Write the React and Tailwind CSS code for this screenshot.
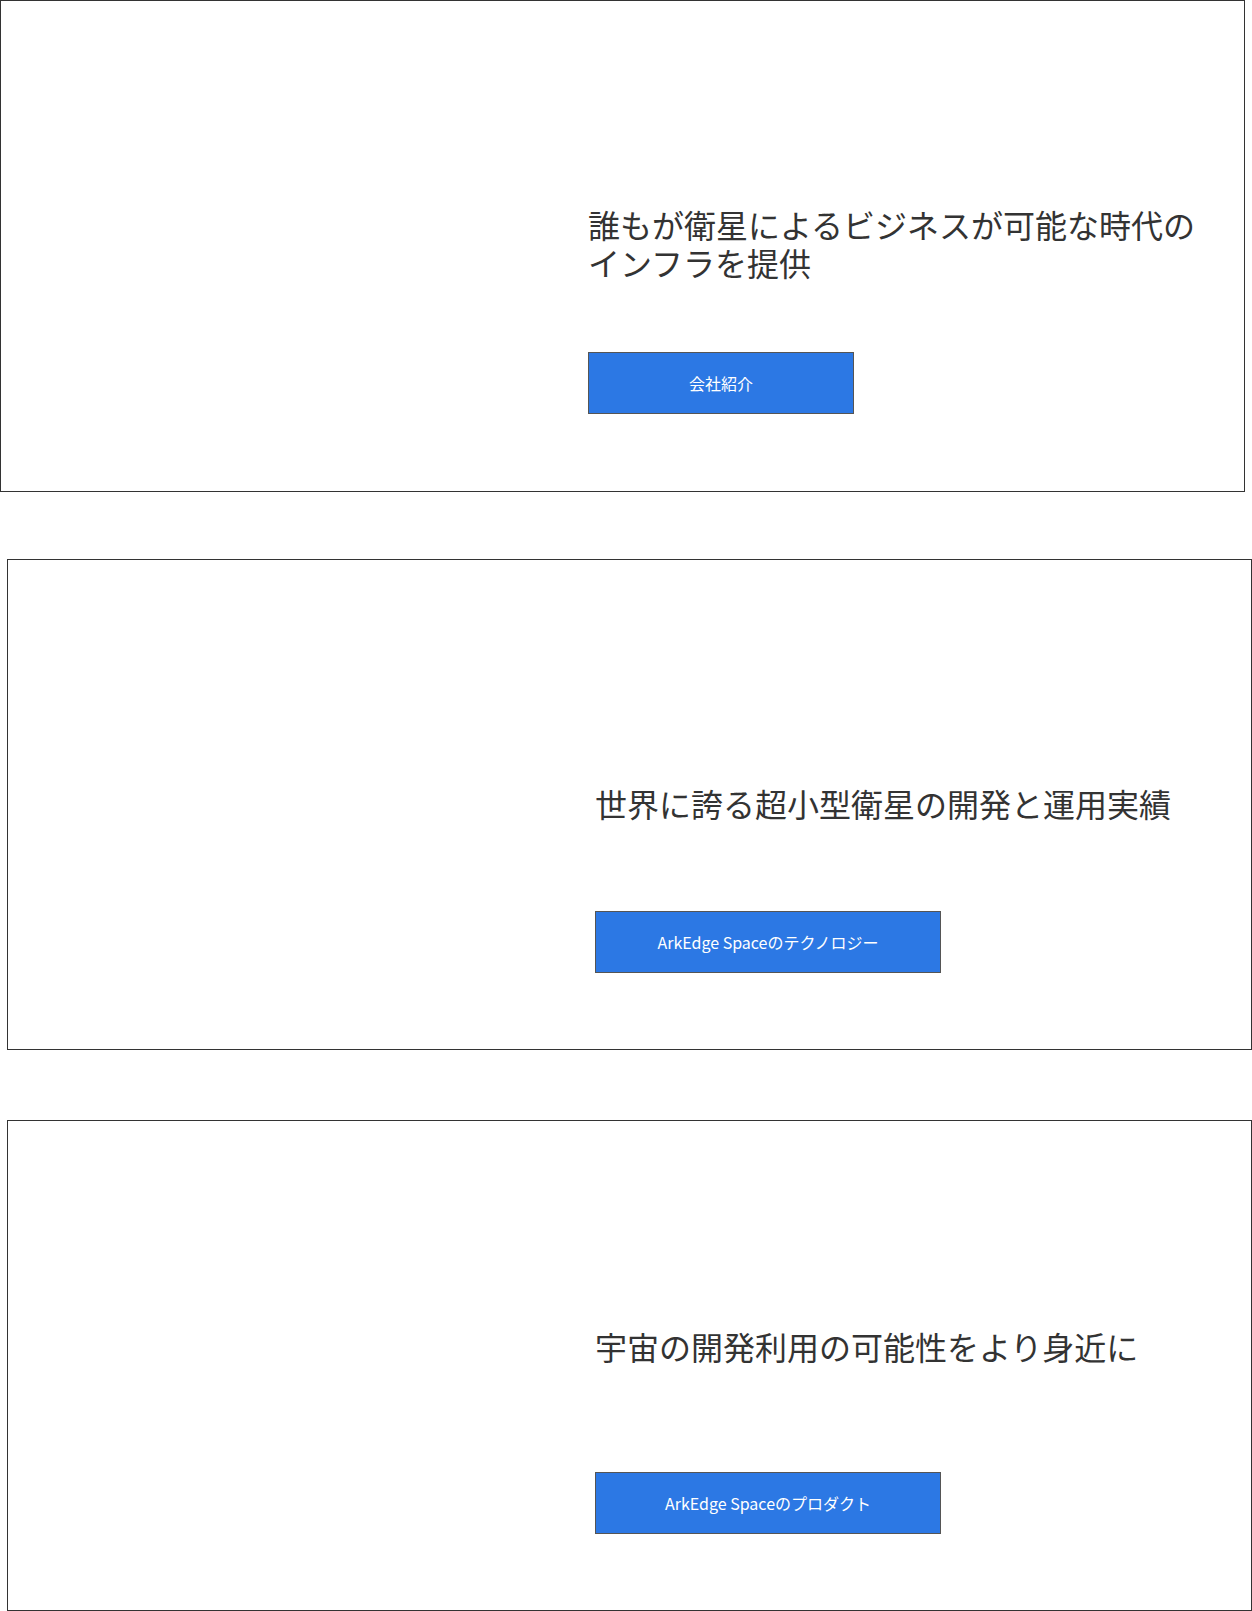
import React from 'react'

const slides = [
  {
    id: 'company',
    title: ['誰もが衛星によるビジネスが可能な時代の', 'インフラを提供'],
    label: '会社紹介',
    wrap: 'h-[492px]',
    pad: 'pt-[204px]',
    btn: 'w-[266px]',
  },
  {
    id: 'technology',
    title: ['世界に誇る超小型衛星の開発と運用実績'],
    label: 'ArkEdge Spaceのテクノロジー',
    wrap: 'h-[491px] mt-[67px] ml-[7px]',
    pad: 'pt-[224px]',
    btn: 'w-[346px]',
  },
  {
    id: 'product',
    title: ['宇宙の開発利用の可能性をより身近に'],
    label: 'ArkEdge Spaceのプロダクト',
    wrap: 'h-[491px] mt-[70px] ml-[7px]',
    pad: 'pt-[206px]',
    btn: 'w-[346px]',
  },
]

function Slide({ s }) {
  return (
    <section className={`w-[1245px] border border-[#333] bg-white flex ${s.wrap}`}>
      <div className="w-[587px] shrink-0" />
      <div className="flex flex-col">
        <div className={`h-[351px] ${s.pad}`}>
          <h2 className="w-[620px] text-[32px] leading-[38px] font-normal text-[#333]">
            {s.title.map((line, i) => (
              <span key={i} className="block">{line}</span>
            ))}
          </h2>
        </div>
        <a
          href="#"
          className={`${s.btn} h-[62px] flex items-center justify-center bg-[#2c78e4] border border-[#555] text-white text-[16px] font-normal`}
        >
          {s.label}
        </a>
      </div>
    </section>
  )
}

export default function App() {
  return (
    <div className="w-[1252px] bg-white font-['Noto_Sans_CJK_JP','Noto_Sans',sans-serif]">
      {slides.map(s => (
        <Slide key={s.id} s={s} />
      ))}
    </div>
  )
}
